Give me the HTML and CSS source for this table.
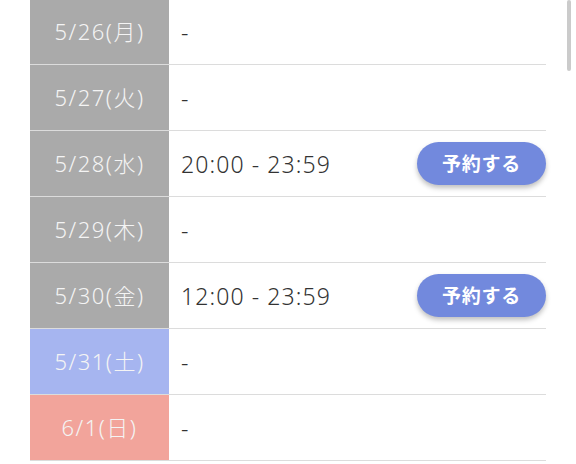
FILE: index.html
```html
<!DOCTYPE html>
<html lang="ja">
<head>
<meta charset="utf-8">
<link rel="stylesheet" href="styles.css">
</head>
<body>
<div class="page">
  <div class="table">
    <div class="row"><div class="date">5/26(月)</div><div class="slot"><span class="time">-</span></div></div>
    <div class="row"><div class="date">5/27(火)</div><div class="slot"><span class="time">-</span></div></div>
    <div class="row"><div class="date">5/28(水)</div><div class="slot"><span class="time">20:00 - 23:59</span><button class="btn">予約する</button></div></div>
    <div class="row"><div class="date">5/29(木)</div><div class="slot"><span class="time">-</span></div></div>
    <div class="row"><div class="date">5/30(金)</div><div class="slot"><span class="time">12:00 - 23:59</span><button class="btn">予約する</button></div></div>
    <div class="row"><div class="date sat">5/31(土)</div><div class="slot"><span class="time">-</span></div></div>
    <div class="row"><div class="date sun">6/1(日)</div><div class="slot"><span class="time">-</span></div></div>
  </div>
  <div class="scrollbar"></div>
</div>
</body>
</html>
```

FILE: styles.css
```css
html, body {
  margin: 0;
  padding: 0;
  background: #fff;
  overflow: hidden;
}
body {
  font-family: "Noto Sans", "Noto Sans CJK JP", sans-serif;
  width: 576px;
  height: 464px;
}
.page {
  position: relative;
  height: 464px;
  overflow: hidden;
}
.table {
  margin: -1px 0 0 30px;
  width: 516px;
  display: flex;
  flex-direction: column;
}
.row {
  display: flex;
  height: 65px;
  border-bottom: 1.5px solid #dcdcdc;
}
.date {
  width: 139px;
  flex: none;
  background: #aaaaaa;
  color: #f4f4f4;
  font-size: 22px;
  font-weight: 300;
  display: flex;
  align-items: center;
  justify-content: center;
  letter-spacing: 1.5px;
  padding-bottom: 3px;
  box-sizing: border-box;
}
.date.sat { background: #a6b5f0; }
.date.sun { background: #f2a49b; }
.slot {
  flex: 1;
  display: flex;
  align-items: center;
  justify-content: space-between;
  padding-left: 12px;
}
.time {
  font-size: 23px;
  font-weight: 300;
  color: #333;
  letter-spacing: 1.1px;
}
.btn {
  border: none;
  width: 129px;
  height: 43px;
  border-radius: 22px;
  background: #7289dd;
  color: #fff;
  font-family: "Noto Sans CJK JP", sans-serif;
  font-weight: 700;
  font-size: 19px;
  box-shadow: 0 3px 5px rgba(0,0,0,0.25);
  letter-spacing: 0.8px;
  padding: 0 0 2px 0;
}
.scrollbar {
  position: absolute;
  left: 567px;
  top: 0;
  width: 4px;
  height: 71px;
  background: #cbcbcb;
  border-radius: 2px;
}
```
